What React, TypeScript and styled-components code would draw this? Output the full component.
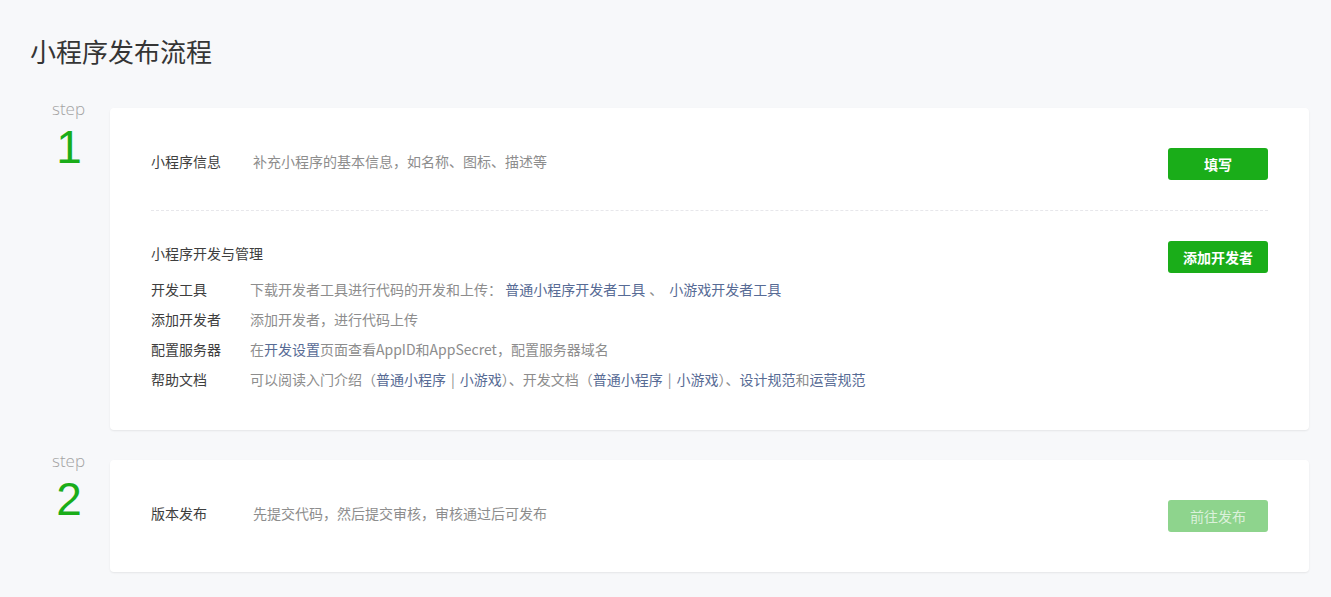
import React from "react";
import styled, { createGlobalStyle } from "styled-components";

const GlobalStyle = createGlobalStyle`
  html, body {
    margin: 0;
    padding: 0;
    background: #f7f8fa;
  }
  body {
    font-family: "Noto Sans CJK SC", "Noto Sans", "Liberation Sans", sans-serif;
    color: #353535;
  }
`;

const Page = styled.div`
  padding: 33px 22px 0 30px;
`;

const Title = styled.h2`
  margin: 0 0 39px;
  font-size: 26px;
  line-height: 36px;
  font-weight: 400;
  color: #353535;
`;

const StepRow = styled.div`
  display: flex;
  align-items: flex-start;
  margin-bottom: 30px;
`;

const StepMark = styled.div`
  width: 80px;
  flex-shrink: 0;
  display: flex;
  flex-direction: column;
  align-items: center;
`;

const StepWord = styled.span`
  font-family: "Open Sans", "Liberation Sans", sans-serif;
  font-weight: 300;
  font-size: 17px;
  line-height: 12px;
  margin: -5px 0 0 -3px;
  color: #a3a3a3;
`;

const StepNumber = styled.span`
  font-family: "Liberation Sans", Arial, sans-serif;
  font-weight: 400;
  font-size: 46px;
  line-height: 64px;
  color: #1aad19;
  margin-left: -2px;
`;

const Card = styled.div`
  flex: 1;
  background: #fff;
  border-radius: 4px;
  box-shadow: 0 1px 2px rgba(0, 0, 0, 0.08);
  padding: 0 41px;
`;

const Section = styled.div<{ $top: number; $bottom: number }>`
  display: flex;
  align-items: flex-start;
  justify-content: space-between;
  padding: ${(p) => p.$top}px 0 ${(p) => p.$bottom}px;
`;

const Divider = styled.div`
  border-top: 1px dashed #e7e7eb;
`;

const Line = styled.div`
  display: flex;
  font-size: 14px;
  line-height: 26px;
`;

const Label = styled.span<{ $width: number }>`
  width: ${(p) => p.$width}px;
  flex-shrink: 0;
  color: #3e3e3e;
  font-weight: 400;
`;

const Desc = styled.span`
  color: #8d8d8d;
`;

const Link = styled.a`
  color: #576b95;
  text-decoration: none;
  cursor: pointer;
`;

const Bar = styled.span`
  color: #8d8d8d;
  margin: 0 5px;
`;

const Sep = styled.span`
  margin: 0 6px 0 4px;
`;

const Block = styled.div`
  display: flex;
  flex-direction: column;
`;

const BlockTitle = styled.div`
  font-size: 14px;
  line-height: 24px;
  color: #3e3e3e;
  margin-bottom: 9px;
`;

const Row = styled.div`
  display: flex;
  font-size: 14px;
  line-height: 30px;
`;

const Button = styled.button<{ $disabled?: boolean }>`
  width: 100px;
  height: 32px;
  flex-shrink: 0;
  border: 0;
  border-radius: 3px;
  background: ${(p) => (p.$disabled ? "#8ed48d" : "#1aad19")};
  color: ${(p) => (p.$disabled ? "rgba(255,255,255,0.7)" : "#fff")};
  font-family: "Noto Sans CJK SC", sans-serif;
  font-size: 14px;
  font-weight: ${(p) => (p.$disabled ? 400 : 700)};
  cursor: ${(p) => (p.$disabled ? "default" : "pointer")};
`;

const App: React.FC = () => {
  return (
    <Page>
      <GlobalStyle />
      <Title>小程序发布流程</Title>

      <StepRow>
        <StepMark>
          <StepWord>step</StepWord>
          <StepNumber>1</StepNumber>
        </StepMark>
        <Card>
          <Section $top={40} $bottom={30}>
            <Line>
              <Label $width={102}>小程序信息</Label>
              <Desc>补充小程序的基本信息，如名称、图标、描述等</Desc>
            </Line>
            <Button>填写</Button>
          </Section>
          <Divider />
          <Section $top={30} $bottom={36}>
            <Block>
              <BlockTitle>小程序开发与管理</BlockTitle>
              <Row>
                <Label $width={99}>开发工具</Label>
                <Desc>
                  下载开发者工具进行代码的开发和上传：&nbsp;<Link>普通小程序开发者工具</Link>
                  <Sep>、</Sep>
                  <Link>小游戏开发者工具</Link>
                </Desc>
              </Row>
              <Row>
                <Label $width={99}>添加开发者</Label>
                <Desc>添加开发者，进行代码上传</Desc>
              </Row>
              <Row>
                <Label $width={99}>配置服务器</Label>
                <Desc>
                  在<Link>开发设置</Link>页面查看AppID和AppSecret，配置服务器域名
                </Desc>
              </Row>
              <Row>
                <Label $width={99}>帮助文档</Label>
                <Desc>
                  可以阅读入门介绍（<Link>普通小程序</Link>
                  <Bar>|</Bar>
                  <Link>小游戏</Link>）、开发文档（<Link>普通小程序</Link>
                  <Bar>|</Bar>
                  <Link>小游戏</Link>）、<Link>设计规范</Link>和<Link>运营规范</Link>
                </Desc>
              </Row>
            </Block>
            <Button>添加开发者</Button>
          </Section>
        </Card>
      </StepRow>

      <StepRow>
        <StepMark>
          <StepWord>step</StepWord>
          <StepNumber>2</StepNumber>
        </StepMark>
        <Card>
          <Section $top={40} $bottom={40}>
            <Line>
              <Label $width={102}>版本发布</Label>
              <Desc>先提交代码，然后提交审核，审核通过后可发布</Desc>
            </Line>
            <Button $disabled>前往发布</Button>
          </Section>
        </Card>
      </StepRow>
    </Page>
  );
};

export default App;
